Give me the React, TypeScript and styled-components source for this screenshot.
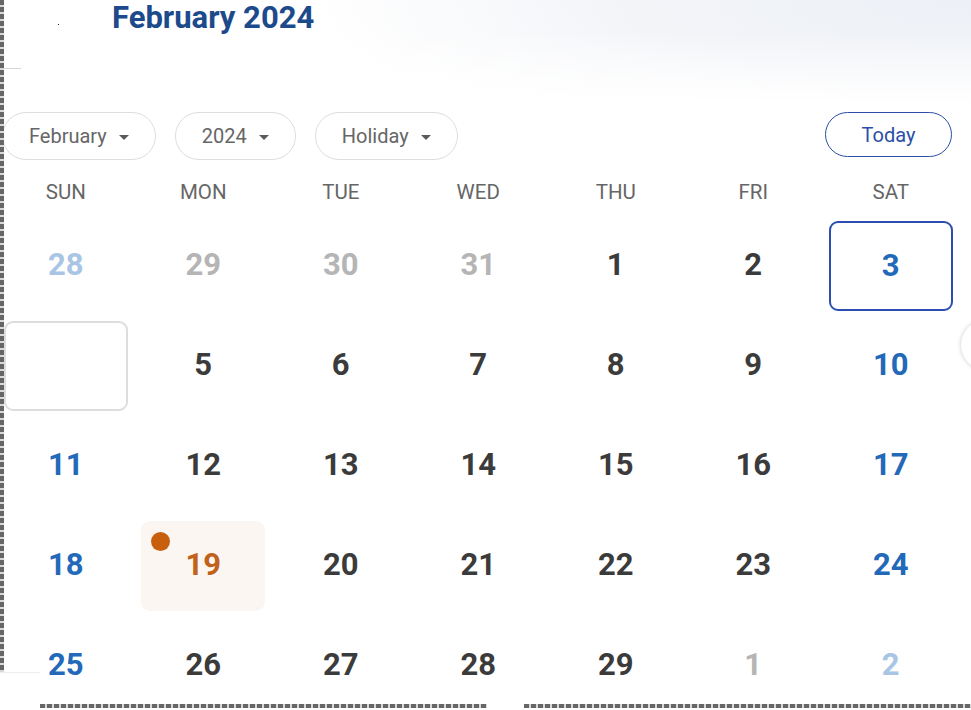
import { FC } from 'react';
import styled, { createGlobalStyle } from 'styled-components';

const GlobalStyle = createGlobalStyle`
  html, body {
    margin: 0;
    padding: 0;
    background: #fff;
    font-family: Roboto, 'Liberation Sans', sans-serif;
  }
`;

type Tone = 'default' | 'weekend' | 'muted' | 'mutedWeekend' | 'holiday' | 'today' | 'hover';

interface DayItem {
  label: string;
  tone: Tone;
}

const weekdays = ['SUN', 'MON', 'TUE', 'WED', 'THU', 'FRI', 'SAT'];

const buildDays = (): DayItem[] => {
  const list: DayItem[] = [];
  [28, 29, 30, 31].forEach((d, i) => list.push({ label: String(d), tone: i === 0 ? 'mutedWeekend' : 'muted' }));
  for (let d = 1; d <= 29; d++) {
    const col = list.length % 7;
    let tone: Tone = col === 0 || col === 6 ? 'weekend' : 'default';
    if (d === 3) tone = 'today';
    if (d === 4) tone = 'hover';
    if (d === 19) tone = 'holiday';
    list.push({ label: String(d), tone });
  }
  list.push({ label: '1', tone: 'muted' });
  list.push({ label: '2', tone: 'mutedWeekend' });
  return list;
};

const toneColor: Record<Tone, string> = {
  default: '#3b3b3b',
  weekend: '#2369b9',
  muted: '#b5b5b5',
  mutedWeekend: '#a9c5e6',
  holiday: '#c0621c',
  today: '#2369b9',
  hover: 'transparent',
};

const App: FC = () => {
  const days = buildDays();

  return (
    <Page>
      <GlobalStyle />
      <Header>
        <Title>February 2024</Title>
        <Speck />
        <Tick />
      </Header>

      <Toolbar>
        <Pill>
          February <Caret />
        </Pill>
        <Pill>
          2024 <Caret />
        </Pill>
        <Pill>
          Holiday <Caret />
        </Pill>
        <TodayButton>Today</TodayButton>
      </Toolbar>

      <Grid>
        {weekdays.map(w => (
          <Weekday key={w}>{w}</Weekday>
        ))}
        {days.map((day, i) => (
          <Slot key={i}>
            <Cell tone={day.tone}>
              {day.tone === 'holiday' && <Dot />}
              {day.label}
            </Cell>
          </Slot>
        ))}
      </Grid>

      <SideButton />
      <LeftEdge />
      <BottomEdge>
        <Corner />
        <Dashes />
        <Gap />
        <Dashes />
      </BottomEdge>
    </Page>
  );
};

export default App;

const Page = styled.div`
  position: relative;
  width: 971px;
  height: 710px;
  overflow: hidden;
  box-sizing: border-box;
  padding-left: 4px;
  background: #fff;
`;

const Header = styled.div`
  position: relative;
  height: 104px;
  margin-left: -4px;
  margin-bottom: -4px;
  padding-left: 112px;
  background:
    linear-gradient(to bottom, rgba(255, 255, 255, 0) 30%, #fff 100%),
    radial-gradient(ellipse 85% 190% at 100% 0%, #edf0f6 0%, #f2f4f8 40%, rgba(255, 255, 255, 0) 80%),
    #fff;
`;

const Title = styled.h1`
  margin: 0;
  padding-top: 0;
  font-size: 31px;
  line-height: 36px;
  font-weight: 700;
  color: #1c4a8b;
`;

const Speck = styled.span`
  position: absolute;
  left: 58px;
  top: 24px;
  width: 1px;
  height: 1px;
  background: #222;
`;

const Tick = styled.span`
  position: absolute;
  left: 4px;
  top: 68px;
  width: 17px;
  height: 1px;
  background: #d6d6d6;
`;

const Toolbar = styled.div`
  display: flex;
  align-items: center;
  gap: 19px;
  height: 48px;
  margin-top: 12px;
  padding-right: 19px;
`;

const Pill = styled.div`
  display: flex;
  align-items: center;
  gap: 12px;
  height: 48px;
  box-sizing: border-box;
  padding: 0 26px;
  border: 1px solid #dedede;
  border-radius: 24px;
  font-size: 20px;
  color: #666;
  &:first-child {
    margin-left: -2px;
  }
`;

const Caret = styled.span`
  width: 0;
  height: 0;
  border-left: 5px solid transparent;
  border-right: 5px solid transparent;
  border-top: 5px solid #5a5a5a;
  margin-top: 2px;
`;

const TodayButton = styled.button`
  margin-left: auto;
  width: 127px;
  height: 45px;
  border: 1px solid #2b4ea6;
  border-radius: 23px;
  background: transparent;
  font-family: Roboto, 'Liberation Sans', sans-serif;
  font-size: 20px;
  color: #2b4ea6;
  cursor: pointer;
  align-self: flex-start;
`;

const Grid = styled.div`
  display: grid;
  grid-template-columns: repeat(7, 137.5px);
  grid-auto-rows: 100px;
  grid-template-rows: 54px;
  margin-left: -7px;
`;

const Weekday = styled.div`
  display: flex;
  align-items: center;
  justify-content: center;
  padding-top: 10px;
  font-size: 20.5px;
  color: #666;
`;

const Slot = styled.div`
  display: flex;
  align-items: center;
  justify-content: center;
`;

const Cell = styled.div<{ tone: Tone }>`
  position: relative;
  display: flex;
  align-items: center;
  justify-content: center;
  width: 124px;
  height: 90px;
  box-sizing: border-box;
  border-radius: 9px;
  margin-top: 3px;
  font-size: 31px;
  font-weight: 700;
  color: ${({ tone }) => toneColor[tone]};
  padding-bottom: ${({ tone }) => (tone === 'today' || tone === 'hover' ? '0px' : '2px')};
  border: ${({ tone }) =>
    tone === 'today' ? '2.5px solid #2b4fb0' : tone === 'hover' ? '2.5px solid #dddddd' : '2px solid transparent'};
  background: ${({ tone }) => (tone === 'holiday' ? '#fcf6f2' : 'transparent')};
`;

const Dot = styled.span`
  position: absolute;
  left: 8px;
  top: 9px;
  width: 19px;
  height: 19px;
  border-radius: 50%;
  background: #c75f0d;
`;

const SideButton = styled.div`
  position: absolute;
  right: -40px;
  top: 320px;
  width: 50px;
  height: 50px;
  border-radius: 50%;
  background: #fff;
  box-shadow: 0 0 4px rgba(0, 0, 0, 0.22);
`;

const LeftEdge = styled.div`
  position: absolute;
  left: 0;
  top: 0;
  width: 4px;
  height: 672px;
  background: repeating-linear-gradient(to bottom, #666 0 5px, #d8d8d8 5px 7px);
`;

const BottomEdge = styled.div`
  position: absolute;
  left: 0;
  right: 0;
  bottom: 0;
  height: 40px;
  display: flex;
  align-items: flex-end;
`;

const Corner = styled.div`
  width: 40px;
  height: 38px;
  background: #fff;
  border-top: 1px solid #eee;
  box-sizing: border-box;
`;

const Dashes = styled.div`
  flex: 1;
  height: 4px;
  margin-bottom: 2px;
  background: repeating-linear-gradient(to right, #666 0 5px, #d8d8d8 5px 7px);
`;

const Gap = styled.div`
  width: 37px;
`;
